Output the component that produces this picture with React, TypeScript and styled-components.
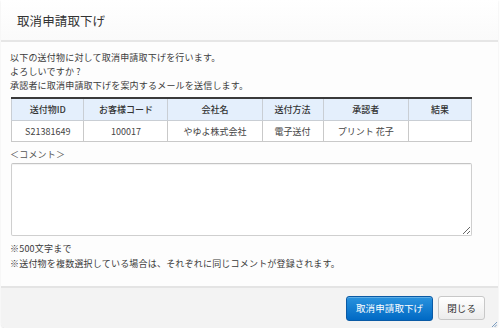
import React from "react";
import styled, { createGlobalStyle } from "styled-components";

const Global = createGlobalStyle`
  html, body { margin: 0; padding: 0; background: #ffffff; }
  body { font-family: "Noto Sans CJK JP", "Noto Sans", sans-serif; color: #333; }
`;

const Dialog = styled.div`
  width: 497px;
  height: 328px;
  margin-left: 1px;
  display: flex;
  flex-direction: column;
  background: #fdfdfd;
  border-radius: 0 0 5px 5px;
  box-shadow: 0 1px 2px rgba(0, 0, 0, 0.12);
  position: relative;
  overflow: hidden;
`;

const Header = styled.div`
  height: 40px;
  flex: none;
  display: flex;
  align-items: center;
  padding-left: 16px;
  background: linear-gradient(#ffffff, #fafafa);
  border-bottom: 2px solid #e6e6e6;
`;

const Title = styled.h1`
  margin: 0;
  font-size: 12.5px;
  font-weight: 400;
  color: #333;
  letter-spacing: 0.1px;
`;

const Body = styled.div`
  flex: 1;
  padding: 9px 0 0 9px;
  display: flex;
  flex-direction: column;
`;

const Para = styled.p`
  margin: 0;
  font-size: 9px;
  line-height: 14px;
  letter-spacing: 0.2px;
  color: #3a3a3a;
`;

const Table = styled.table`
  margin-top: 4px;
  margin-left: 1px;
  width: 461px;
  border-collapse: collapse;
  border-top: 2px solid #3a3a3a;
  font-size: 9px;
  color: #333;
`;

const Th = styled.th<{ $w: number }>`
  width: ${(p) => p.$w}px;
  height: 21px;
  padding: 0;
  background: #e4effc;
  border: 1px solid #c9ced4;
  border-top: none;
  font-weight: 500;
  text-align: center;
`;

const Td = styled.td`
  height: 20px;
  padding: 0;
  border: 1px solid #c9c9c9;
  text-align: center;
  background: #fff;
  color: #444;
`;

const Label = styled(Para)`
  margin-top: 6px;
  color: #555;
`;

const Comment = styled.textarea`
  box-sizing: border-box;
  margin: 1px 0 0 1px;
  width: 461px;
  height: 73px;
  border: 1px solid #cfcfcf;
  border-top-color: #c4c4c4;
  border-radius: 2px;
  background: #fff;
  box-shadow: inset 0 1px 1px rgba(0, 0, 0, 0.06);
  resize: vertical;
  font-family: inherit;
`;

const Notes = styled.div`
  margin-top: 6px;
  display: flex;
  flex-direction: column;
  gap: 1px;
`;

const Footer = styled.div`
  height: 40px;
  flex: none;
  border-top: 2px solid #e4e4e4;
  background: #f3f3f3;
  display: flex;
  align-items: center;
  justify-content: flex-end;
  gap: 5px;
  padding-right: 13px;
`;

const Button = styled.button<{ $primary?: boolean }>`
  box-sizing: border-box;
  height: ${(p) => (p.$primary ? 25 : 24)}px;
  padding: 0 ${(p) => (p.$primary ? 9 : 8)}px;
  border-radius: 3px;
  font-family: inherit;
  font-size: 9.5px;
  letter-spacing: 0.1px;
  cursor: pointer;
  color: ${(p) => (p.$primary ? "#fff" : "#333")};
  border: 1px solid ${(p) => (p.$primary ? "#0a5aa5" : "#c8c8c8")};
  background: ${(p) =>
    p.$primary
      ? "linear-gradient(#2a93de, #0069c4)"
      : "linear-gradient(#ffffff, #ececec)"};
  box-shadow: ${(p) =>
    p.$primary ? "inset 0 1px 0 rgba(255,255,255,0.25)" : "inset 0 1px 0 #fff"};
`;

const Grip = styled.svg`
  position: absolute;
  right: 1px;
  bottom: 1px;
`;

const cols = [
  { h: "送付物ID", w: 72, v: "S21381649" },
  { h: "お客様コード", w: 84, v: "100017" },
  { h: "会社名", w: 95, v: "やゆよ株式会社" },
  { h: "送付方法", w: 61, v: "電子送付" },
  { h: "承認者", w: 86, v: "プリント 花子" },
  { h: "結果", w: 63, v: "" },
];

export default function App() {
  return (
    <>
      <Global />
      <Dialog>
        <Header>
          <Title>取消申請取下げ</Title>
        </Header>
        <Body>
          <Para>以下の送付物に対して取消申請取下げを行います。</Para>
          <Para>よろしいですか ?</Para>
          <Para>承認者に取消申請取下げを案内するメールを送信します。</Para>
          <Table>
            <thead>
              <tr>
                {cols.map((c) => (
                  <Th key={c.h} $w={c.w}>
                    {c.h}
                  </Th>
                ))}
              </tr>
            </thead>
            <tbody>
              <tr>
                {cols.map((c) => (
                  <Td key={c.h}>{c.v}</Td>
                ))}
              </tr>
            </tbody>
          </Table>
          <Label>＜コメント＞</Label>
          <Comment />
          <Notes>
            <Para>※500文字まで</Para>
            <Para>※送付物を複数選択している場合は、それぞれに同じコメントが登録されます。</Para>
          </Notes>
        </Body>
        <Footer>
          <Button $primary>取消申請取下げ</Button>
          <Button>閉じる</Button>
        </Footer>
        <Grip width="5" height="5" viewBox="0 0 5 5">
          <path d="M5 0 L0 5 M5 2.5 L2.5 5" stroke="#7a9cc0" strokeWidth="1" />
        </Grip>
      </Dialog>
    </>
  );
}
